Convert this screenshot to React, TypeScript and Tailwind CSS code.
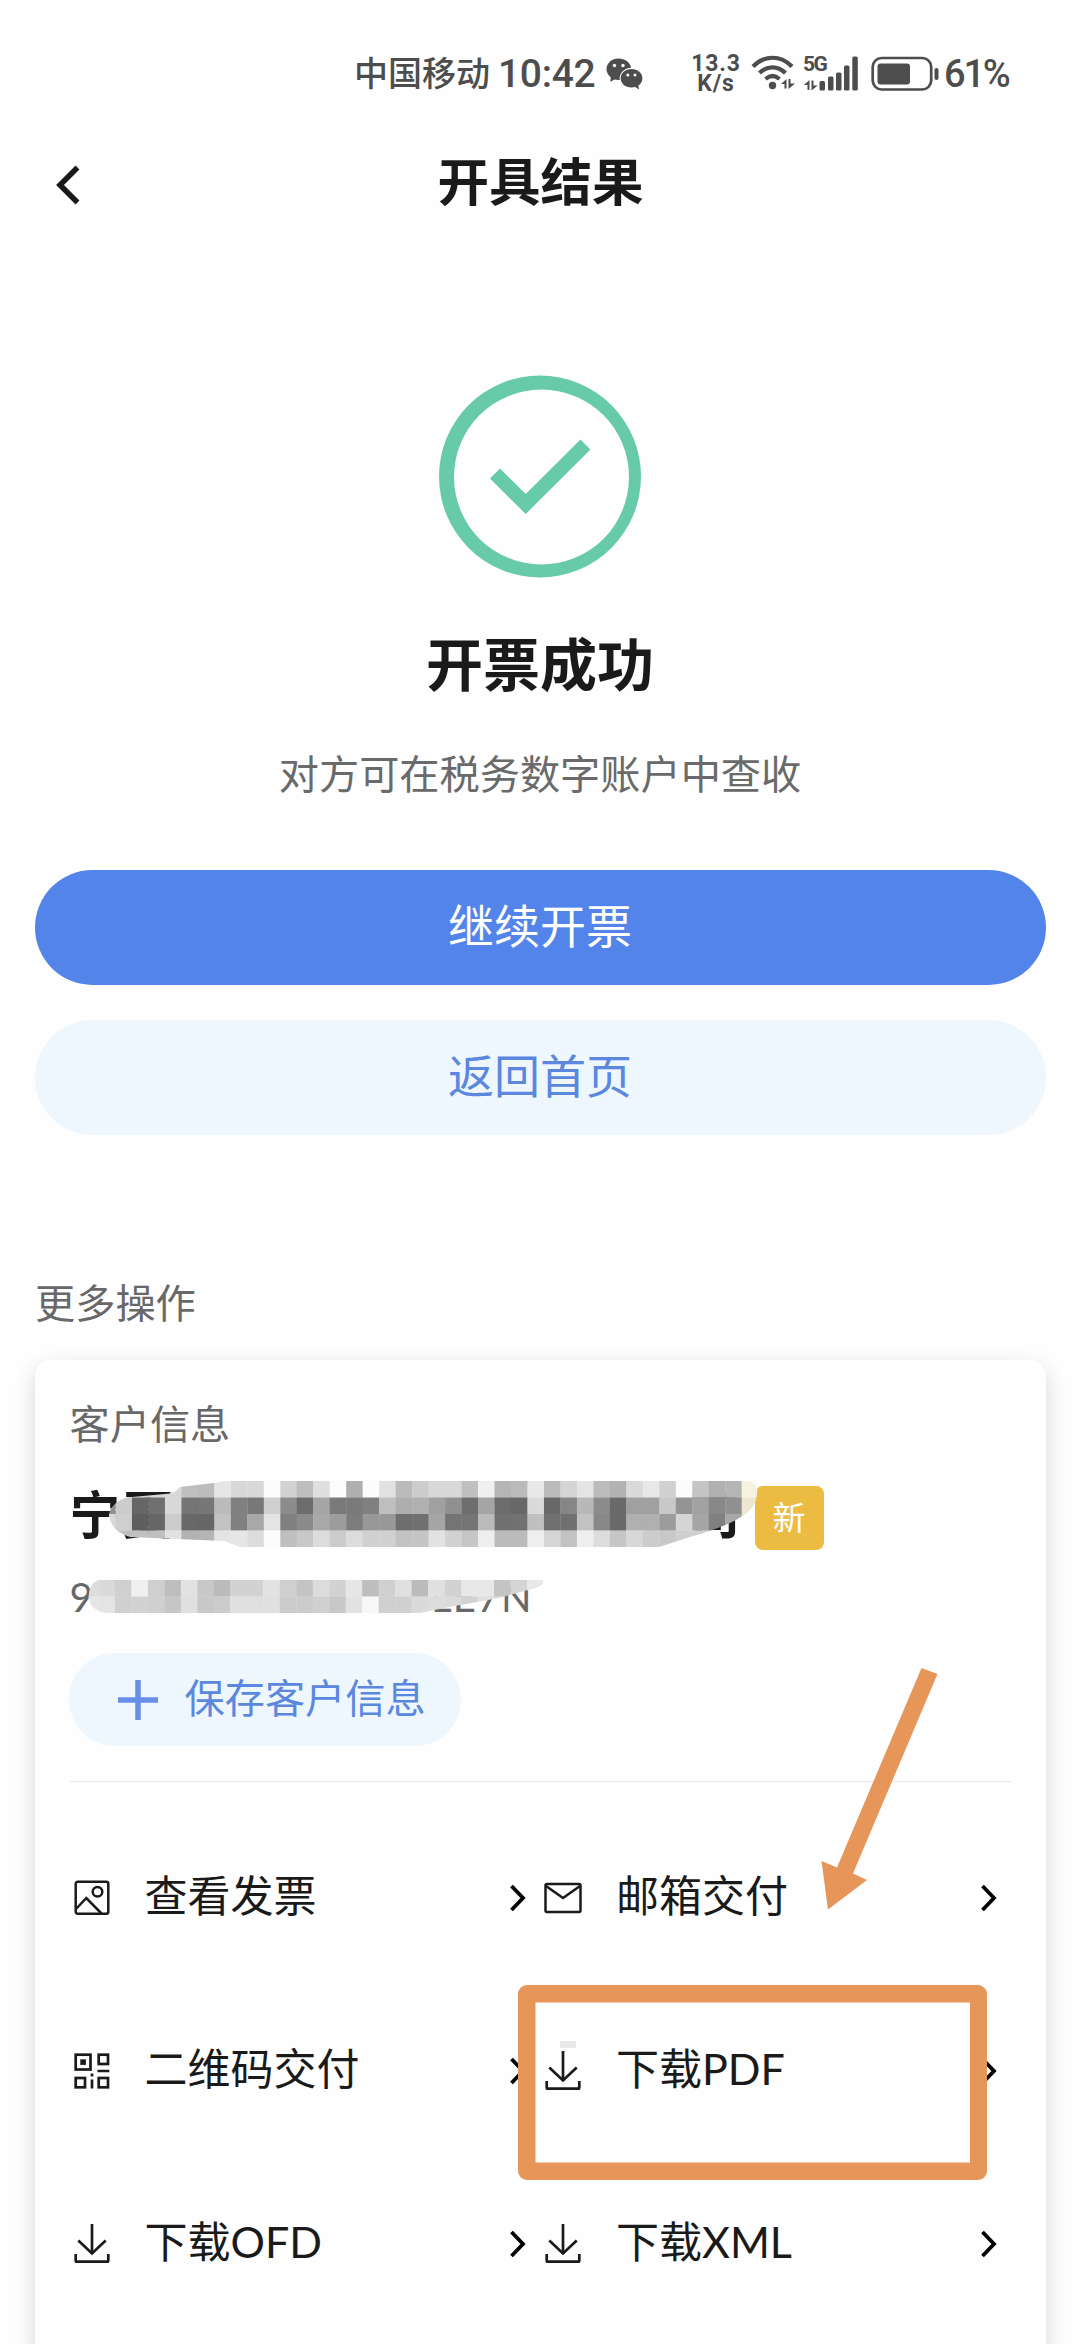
import React from 'react';

interface Action {
  label: string;
  icon: React.ReactNode;
}

const WechatIcon = () => (
  <svg width="37" height="33" viewBox="0 0 37 33" fill="#4d4d4d">
    <path d="M12.500 0.500C5.600 0.500 0.500 5.200 0.500 11c0 3.600 1.800 6.500 4.400 8.400L4.200 23.800l4.600-2.300c1.600.4 3.400.6 5 .400A11.500 10.500 0 0 1 25.200 9.800C24.200 4.400 18.900.5 12.500.5z" />
    <path d="M25.500 11C19.300 11 14.700 15 14.700 20.300s4.600 9.300 10.800 9.300c1.300 0 2.500-.2 3.700-.5l4 2.400-.9-3.800c2.500-1.800 4.100-4.300 4.100-7.400C36.400 15 31.700 11 25.500 11z" />
    <g fill="#fefefe">
      <circle cx="8.500" cy="7.500" r="1.700" />
      <circle cx="17" cy="7.500" r="1.700" />
      <circle cx="21.800" cy="17" r="1.500" />
      <circle cx="29" cy="17" r="1.500" />
    </g>
  </svg>
);

const WifiIcon = () => (
  <svg width="44" height="36" viewBox="0 0 44 36" fill="none" stroke="#4d4d4d" strokeWidth="4.200">
    <path d="M2 11.500C13.500-.2 29.500-.2 41 11.500" />
    <path d="M8.500 18C16.500 10.400 26.500 10.400 34.500 18" />
    <path d="M14.500 24C19 20.200 24 20.200 28.500 24" />
    <circle cx="21.500" cy="30.500" r="3.700" fill="#4d4d4d" stroke="none" />
    <path d="M35.500 24v9.500h-2V29h-3.500zM37.500 34v-10h2v4.500h4.500z" fill="#4d4d4d" stroke="none" />
  </svg>
);

const SignalIcon = () => (
  <div className="relative h-9 w-[55px]">
    <span className="absolute left-0 top-px font-[Roboto] text-[21px] font-bold leading-[17px] tracking-[-1.500px] text-[#4d4d4d]">5G</span>
    <svg width="55" height="36" viewBox="0 0 55 36" fill="#4d4d4d">
      <path d="M6.500 25v10h-2v-5H.8zM8.500 35.500v-10h2v5h4.200z" />
      <rect x="16.500" y="26" width="5.500" height="9.500" rx="1.500" />
      <rect x="25" y="21.500" width="5.500" height="14" rx="1.500" />
      <rect x="33" y="17.500" width="5.500" height="18" rx="1.500" />
      <rect x="41" y="10.500" width="5.500" height="25" rx="1.500" />
      <rect x="49.300" y="1.500" width="5.500" height="34" rx="1.500" />
    </svg>
  </div>
);

const BatteryIcon = () => (
  <svg width="69" height="36" viewBox="0 0 69 36">
    <rect x="1.700" y="2" width="58.500" height="31.500" rx="9" fill="none" stroke="#4d4d4d" strokeWidth="2.700" />
    <rect x="6.500" y="7.500" width="32.500" height="21" rx="3" fill="#4d4d4d" />
    <rect x="63.500" y="12" width="4" height="12" rx="2" fill="#4d4d4d" />
  </svg>
);

const PictureIcon = () => (
  <svg width="36" height="36" viewBox="0 0 36 36" fill="none" stroke="#1a1a1a" strokeWidth="2.500">
    <rect x="1.700" y="1.700" width="32.600" height="32" rx="2" />
    <circle cx="23.500" cy="11.800" r="4.800" />
    <path d="M2 29L12.300 18L27.500 33.500" />
  </svg>
);

const MailIcon = () => (
  <svg width="38" height="36" viewBox="0 0 38 36" fill="none" stroke="#1a1a1a" strokeWidth="2.500">
    <rect x="1.500" y="4" width="35" height="28" rx="1.500" />
    <path d="M2 6L19 18L36 6" />
  </svg>
);

const QrIcon = () => (
  <svg width="36" height="36" viewBox="0 0 36 36" fill="none" stroke="#1a1a1a" strokeWidth="2.700">
    <rect x="1.700" y="1.700" width="14.800" height="14.800" />
    <rect x="24.700" y="1.700" width="9.300" height="9.300" />
    <rect x="1.700" y="25" width="9.300" height="9.300" />
    <rect x="24.700" y="25" width="9.300" height="9.300" />
    <rect x="6.300" y="6.300" width="5.600" height="5.600" fill="#1a1a1a" stroke="none" />
    <path d="M23.500 18h11.800M18 26.500v9M18 20.500v3" />
  </svg>
);

const DownloadIcon = () => (
  <svg width="36" height="40" viewBox="0 0 36 40" fill="none" stroke="#1a1a1a" strokeWidth="2.700">
    <path d="M18 0v30" />
    <path d="M4.300 16.500L18 29.500L31.700 16.500" />
    <path d="M1.700 30v6.500q0 1.200 1.200 1.200h30.200q1.200 0 1.200-1.200V30" />
  </svg>
);

const ChevronRight = () => (
  <svg width="16" height="28" viewBox="0 0 16 28" fill="none" stroke="#000" strokeWidth="3.800">
    <path d="M1.500 2L13 14L1.500 26" />
  </svg>
);

const actions: Action[] = [
  { label: '查看发票', icon: <PictureIcon /> },
  { label: '邮箱交付', icon: <MailIcon /> },
  { label: '二维码交付', icon: <QrIcon /> },
  { label: '下载PDF', icon: <DownloadIcon /> },
  { label: '下载OFD', icon: <DownloadIcon /> },
  { label: '下载XML', icon: <DownloadIcon /> },
];

// Grey level of every block, two hex digits each
const nameRows = [
  'd8d8d8d8d8bfbce6d8d8fcd2bedffcaffce2bbccd8d8c0f0b5bbe8bbd5e4bcb2dae8d0fcc5b0b5',
  '90cc6670d87577bb8078d08c6ca57a7a80bfaeb0a0906ea56c68da6886b88c6aa0a0c894a28890',
  'd8cf5e66cc6866c280a8e4808aa89c7c98986e70a57474bb7072c07070c2886ab0b09cd5a580a8',
  'bfbfc0bfe2b2b5e4e6dcfcbfc8dcccdcd0d0c2c5e2d2c6eebbbbeed6c2eedcc6d8ccc8cfcfcfcf',
];

const taxRows = [
  'dcdad0f0cfbee2c8bbd2d2e2cfc4dcd2e6bed0e0bbe0d2e8e8c4d4e8',
  'e6e4d0d2d0c6e0c8cce0e0e0ccccd0c8e2f8d0d0dadcdad2e0dce0e4',
];

const CELL = 16.48;

const Mosaic = ({ rows }: { rows: string[] }) => (
  <>
    {rows.map((row, y) =>
      (row.match(/../g) || []).map((g, x) => (
        <rect
          key={`${x}-${y}`}
          x={x * CELL}
          y={y * 16.5}
          width={CELL + 0.3}
          height={16.8}
          fill={`#${g}${g}${g}`}
        />
      ))
    )}
  </>
);

const NameMosaic = () => (
  <svg className="absolute left-[29px] top-[-5px]" width="660" height="66" viewBox="0 0 660 66">
    <clipPath id="name-clip">
      <path d="M10 35C10 26 21 16 33 16L66 13Q76 13 81 6L115 2L127 0H650Q660 4 658 12C658 30 640 42 591 56L560 66H141L125 60L31 56Q12 50 10 35z" />
    </clipPath>
    <g clipPath="url(#name-clip)">
      <Mosaic rows={nameRows} />
      <rect x="642.700" y="0" width="18" height="16.500" fill="#f8f2e0" />
      <rect x="642.700" y="16.500" width="18" height="33" fill="#efe6d0" />
    </g>
  </svg>
);

const TaxMosaic = () => (
  <svg className="absolute left-[12.500px] top-[7px]" width="462" height="33" viewBox="0 0 462 33">
    <clipPath id="tax-clip">
      <path d="M6.500 17Q7 4 16 0H461V4Q456 8 442 11L417 18L367 27L338 33H24Q8 30 6.500 17z" />
    </clipPath>
    <g clipPath="url(#tax-clip)">
      <Mosaic rows={taxRows} />
    </g>
  </svg>
);

const StatusBar = () => (
  <div className="flex h-[98px] items-start pl-[354px] pt-[49px] text-[#4d4d4d]">
    <span className="text-[34px] font-medium leading-[47px]">中国移动</span>
    <span className="ml-[8px] w-[98px] whitespace-nowrap font-[Roboto] text-[39px] font-medium leading-[50px] tracking-[-0.300px]">10:42</span>
    <div className="ml-[10px] mt-[9px]">
      <WechatIcon />
    </div>
    <div className="ml-[46px] mt-[4px] flex w-[54px] flex-col items-center font-[Roboto] text-[23px] font-bold">
      <span className="leading-[21px] tracking-[0.800px]">13.3</span>
      <span className="leading-[20px] tracking-[0.800px]">K/s</span>
    </div>
    <div className="ml-[8px] mt-1.5">
      <WifiIcon />
    </div>
    <div className="ml-2 mt-[6px]">
      <SignalIcon />
    </div>
    <div className="ml-[13px] mt-[7px]">
      <BatteryIcon />
    </div>
    <span className="ml-[4px] font-[Roboto] text-[38px] font-medium leading-[51px] tracking-[-2.200px]">61%</span>
  </div>
);

const App: React.FC = () => {
  return (
    <div className="relative h-[2344px] w-[1080px] overflow-hidden bg-[#fefefe] font-[Lato,'Noto_Sans_CJK_SC',sans-serif] text-[#1a1a1a]">
      <StatusBar />

      <header className="mt-[50px] flex h-[70px] items-center pl-[56px] pr-[79px]">
        <svg width="24" height="42" viewBox="0 0 24 42" fill="none" stroke="#1a1a1a" strokeWidth="5.500" className="mt-1">
          <path d="M21.500 3.500L4 21L21.500 38.500" />
        </svg>
        <h1 className="flex-1 pb-[3px] text-center text-[51.500px] font-bold leading-[67px]">开具结果</h1>
      </header>

      <section className="flex flex-col items-center pt-[156px]">
        <svg width="204" height="204" viewBox="0 0 204 204" fill="#67caa9">
          <path
            fillRule="evenodd"
            d="M1 102.500a101 101 0 1 0 202 0a101 101 0 1 0-202 0zM16 103a87.500 87.500 0 1 0 175 0a87.500 87.500 0 1 0-175 0z"
          />
          <path d="M52 104.500L62 94.500L87.700 120L142.500 65.500L152.500 75.500L87.700 140z" />
        </svg>
        <h2 className="mt-[49px] text-[57px] font-bold leading-[74px]">开票成功</h2>
        <p className="mt-[43px] text-[40.200px] leading-[60px] text-[#6a6a6a]">对方可在税务数字账户中查收</p>
      </section>

      <div className="mt-[66px] flex flex-col gap-[35px] px-[34.500px]">
        <button className="h-[115px] rounded-full bg-[#5384ea] pb-[4px] text-[46px] leading-[60px] text-white">继续开票</button>
        <button className="h-[115px] rounded-full bg-[#eef6fe] pb-[4px] text-[46px] leading-[60px] text-[#5b87de]">返回首页</button>
      </div>

      <p className="mt-[138px] pl-[35px] text-[40.200px] leading-[60px] text-[#686868]">更多操作</p>

      <section className="mx-[34.500px] mt-[27px] h-[1000px] rounded-[16px] bg-[#fefefe] px-[35px] pt-[34px] shadow-[0_8px_22px_rgba(0,0,0,0.16)]">
        <p className="text-[40.200px] leading-[60px] text-[#686868]">客户信息</p>

        <div className="relative mt-[32px] flex h-[64px] items-center">
          <span className="w-[53px] pb-[9px] text-[51.500px] font-bold leading-[64px]">宁</span>
          <span className="w-[566px] pb-[9px] text-[51.500px] font-bold leading-[64px]">夏</span>
          <span className="w-[66px] pb-[9px] text-[51.500px] font-bold leading-[64px]">司</span>
          <span className="flex h-[64px] w-[69px] items-center justify-center rounded-lg bg-[#ecbb42] text-[33px] text-white">新</span>
          <NameMosaic />
        </div>

        <div className="relative mt-[23px] flex h-[48px] w-[463px] items-center justify-between text-[40px] leading-[48px] text-[#686868]">
          <span>9</span>
          <span className="tracking-[1px]">LE7N</span>
          <TaxMosaic />
        </div>

        <button className="-ml-px mt-[32px] flex h-[93px] w-[392px] items-center rounded-full bg-[#eef6fe] pl-[49px] text-[#5b87de]">
          <svg width="40" height="40" viewBox="0 0 40 40" stroke="#688fe7" strokeWidth="5.500">
            <path d="M20 0v40M0 20h40" />
          </svg>
          <span className="ml-[27px] pb-[4px] text-[40.200px] leading-[60px]">保存客户信息</span>
        </button>

        <div className="mt-[35px] h-px w-[941px] bg-[#e8e8e8]" />

        <div className="mt-[29px] grid w-[943px] grid-cols-2">
          {actions.map((item) => (
            <div key={item.label} className="flex h-[173px] items-center">
              <div className="ml-[3px] flex w-[38px] shrink-0 justify-center">{item.icon}</div>
              <span className="ml-[34px] flex-1 pb-[4px] text-[43px] leading-[60px]">{item.label}</span>
              <div className="mr-[15.500px]">
                <ChevronRight />
              </div>
            </div>
          ))}
        </div>
      </section>

      {/* Highlight frame and arrow over the PDF entry */}
      <div className="absolute left-[560px] top-[2041px] h-[7px] w-[16px] bg-[#e8e8e8]" />
      <div className="absolute left-[518px] top-[1985px] h-[195px] w-[469px] rounded-[9px] bg-[#e69658] [clip-path:path(evenodd,'M0_0H469V195H0zM17.500_17.500V177.500H452V17.500z')]" />
      <svg className="absolute left-[820px] top-[1666px]" width="120" height="246" viewBox="0 0 120 246" fill="#e69658">
        <path d="M101.500 2L117.500 8L33 207.500L47 214L8 243.500L1.500 195L17 201.500z" />
      </svg>
    </div>
  );
};

export default App;
